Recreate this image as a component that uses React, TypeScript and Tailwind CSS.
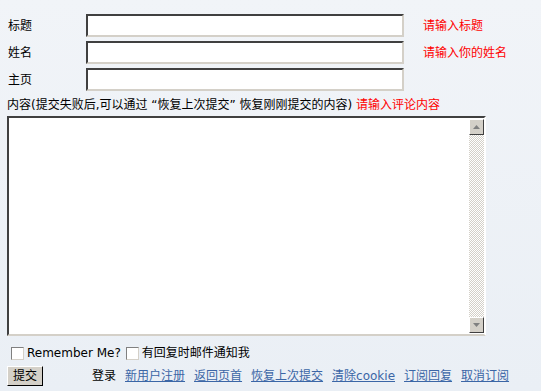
import React from 'react';

const font = { fontFamily: '"DejaVu Sans", "Noto Sans CJK SC", sans-serif' };

const Field = ({ label, hint }: { label: string; hint?: string }) => (
  <div className="flex items-center h-[23px] mb-[4px]">
    <span className="w-[79px] pl-[1px] text-[12px] text-black">{label}</span>
    <input
      type="text"
      className="w-[318px] h-[23px] bg-white border-2 border-t-[#404040] border-l-[#404040] border-b-[#d4d0c8] border-r-[#d4d0c8] outline-none"
    />
    {hint && <span className="ml-[19px] text-[12px] text-[#ff0000]">{hint}</span>}
  </div>
);

const Arrow = ({ up }: { up?: boolean }) => (
  <div className="w-[15px] h-[16px] bg-[#d4d0c8] border border-t-white border-l-white border-b-[#404040] border-r-[#404040] flex items-center justify-center">
    <svg width="7" height="4" viewBox="0 0 7 4">
      {up ? <polygon points="3.5,0 7,4 0,4" fill="#808080" /> : <polygon points="0,0 7,0 3.5,4" fill="#808080" />}
    </svg>
  </div>
);

export default function App() {
  const links = ['新用户注册', '返回页首', '恢复上次提交', '清除cookie', '订阅回复', '取消订阅'];
  return (
    <div className="w-[541px] h-[391px] bg-gradient-to-b from-[#f1f4f8] to-[#eaeff5] pt-[14px] pl-[7px] overflow-hidden" style={font}>
      <Field label="标题" hint="请输入标题" />
      <Field label="姓名" hint="请输入你的姓名" />
      <Field label="主页" />
      <div className="mt-[6px] leading-[16px] text-[12px] text-black">
        内容(提交失败后,可以通过 “恢复上次提交” 恢复刚刚提交的内容) <span className="text-[#ff0000]">请输入评论内容</span>
      </div>
      <div className="mt-[3px] w-[479px] h-[220px] flex bg-white border-2 border-t-[#404040] border-l-[#404040] border-b-[#d4d0c8] border-r-[#ffffff]">
        <textarea className="flex-1 resize-none outline-none bg-white" />
        <div className="w-[15px] flex flex-col mt-[1px] mb-[1px]">
          <Arrow up />
          <div className="flex-1 bg-[repeating-conic-gradient(#d4d0c8_0%_25%,#ffffff_0%_50%)] bg-[length:2px_2px]" />
          <Arrow />
        </div>
      </div>
      <div className="mt-[9px] flex items-center h-[16px] text-[12px] text-black">
        <span className="ml-[4px] w-[13px] h-[13px] bg-white border border-t-[#808080] border-l-[#808080] border-b-[#d4d0c8] border-r-[#d4d0c8]" />
        <span className="ml-[3px]">Remember Me?</span>
        <span className="ml-[5px] w-[13px] h-[13px] bg-white border border-t-[#808080] border-l-[#808080] border-b-[#d4d0c8] border-r-[#d4d0c8]" />
        <span className="ml-[3px]">有回复时邮件通知我</span>
      </div>
      <div className="mt-[5px] flex items-center text-[12px]">
        <button className="w-[36px] h-[20px] bg-[#d4d0c8] border border-t-white border-l-white border-b-black border-r-black text-black text-[12px] leading-none">
          提交
        </button>
        <span className="ml-[49px] text-black">登录</span>
        {links.map((l) => (
          <a key={l} href="#" className="ml-[9px] text-[#3b66a6] underline">
            {l}
          </a>
        ))}
      </div>
    </div>
  );
}
